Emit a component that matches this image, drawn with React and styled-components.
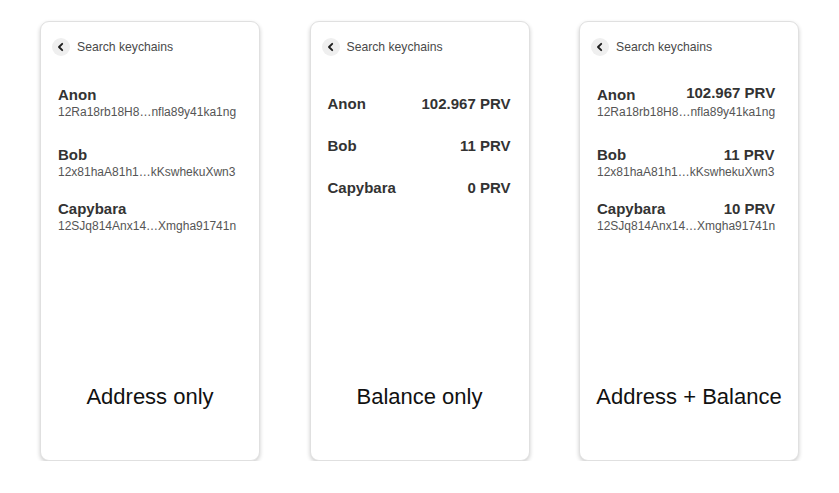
import React from 'react';
import styled, { createGlobalStyle } from 'styled-components';

const GlobalStyle = createGlobalStyle`
  html, body {
    margin: 0;
    padding: 0;
    background: #ffffff;
  }
  body {
    font-family: 'Liberation Sans', Arial, Helvetica, sans-serif;
    color: #333;
  }
`;

const Page = styled.div`
  display: flex;
  gap: 49.5px;
  padding: 21px 0 0 40px;
`;

const Card = styled.div`
  box-sizing: border-box;
  width: 220px;
  height: 440px;
  display: flex;
  flex-direction: column;
  background: #fff;
  border: 1px solid #e0e0e0;
  border-radius: 9px;
  box-shadow: 0 2px 4px rgba(0, 0, 0, 0.2);
`;

const Header = styled.div`
  display: flex;
  align-items: center;
  gap: 7px;
  margin: 16px 0 0 11px;
  font-size: 12.2px;
  line-height: 18px;
  color: #4a4a4a;
`;

const BackButton = styled.span`
  width: 18px;
  height: 18px;
  border-radius: 50%;
  background: #efefef;
  display: flex;
  align-items: center;
  justify-content: center;
`;

const List = styled.div`
  display: flex;
  flex-direction: column;
  align-items: flex-start;
  gap: ${p => p.$gap}px;
  margin: ${p => p.$top}px 0 0 17px;
`;

const Item = styled.div`
  display: flex;
  flex-direction: column;
  gap: 1px;
  width: ${p => (p.$fill ? '183px' : 'auto')};

  &:first-child {
    margin-bottom: ${p => p.$firstExtra || 0}px;
  }
`;

const TopRow = styled.div`
  display: flex;
  justify-content: space-between;
  align-items: flex-start;
  gap: 12px;
`;

const Name = styled.span`
  font-size: 15px;
  line-height: 18px;
  font-weight: 700;
  color: #333;
`;

const Amount = styled.span`
  font-size: 15px;
  line-height: 18px;
  font-weight: 700;
  color: #333;
  margin-top: ${p => (p.$lift ? '-2px' : '0')};
`;

const Address = styled.span`
  font-size: 12px;
  line-height: 15px;
  color: #555;
  white-space: nowrap;
`;

const Caption = styled.div`
  margin-top: auto;
  padding-bottom: 50px;
  text-align: center;
  font-size: 22px;
  line-height: 26px;
  color: #111;
`;

const keychains = [
  { name: 'Anon', address: '12Ra18rb18H8…nfla89y41ka1ng', balance: '102.967 PRV' },
  { name: 'Bob', address: '12x81haA81h1…kKswhekuXwn3', balance: '11 PRV' },
  { name: 'Capybara', address: '12SJq814Anx14…Xmgha91741n', balance: '0 PRV', full: '10 PRV' },
];

const Chevron = () => (
  <svg width="10" height="10" viewBox="0 0 10 10">
    <path d="M6.2 1.8 L3 5 L6.2 8.2" fill="none" stroke="#1f1f1f" strokeWidth="1.9" strokeLinecap="round" strokeLinejoin="round" />
  </svg>
);

const SearchHeader = () => (
  <Header>
    <BackButton><Chevron /></BackButton>
    Search keychains
  </Header>
);

const App = () => (
  <>
    <GlobalStyle />
    <Page>
      <Card>
        <SearchHeader />
        <List $top={30} $gap={20.5}>
          {keychains.map(k => (
            <Item key={k.name} $firstExtra={5}>
              <Name>{k.name}</Name>
              <Address>{k.address}</Address>
            </Item>
          ))}
        </List>
        <Caption>Address only</Caption>
      </Card>

      <Card>
        <SearchHeader />
        <List $top={39} $gap={24}>
          {keychains.map(k => (
            <Item key={k.name} $fill>
              <TopRow>
                <Name>{k.name}</Name>
                <Amount>{k.balance}</Amount>
              </TopRow>
            </Item>
          ))}
        </List>
        <Caption>Balance only</Caption>
      </Card>

      <Card>
        <SearchHeader />
        <List $top={30} $gap={20.5}>
          {keychains.map((k, i) => (
            <Item key={k.name} $firstExtra={5}>
              <TopRow>
                <Name>{k.name}</Name>
                <Amount $lift={i === 0}>{k.full || k.balance}</Amount>
              </TopRow>
              <Address>{k.address}</Address>
            </Item>
          ))}
        </List>
        <Caption>Address + Balance</Caption>
      </Card>
    </Page>
  </>
);

export default App;
